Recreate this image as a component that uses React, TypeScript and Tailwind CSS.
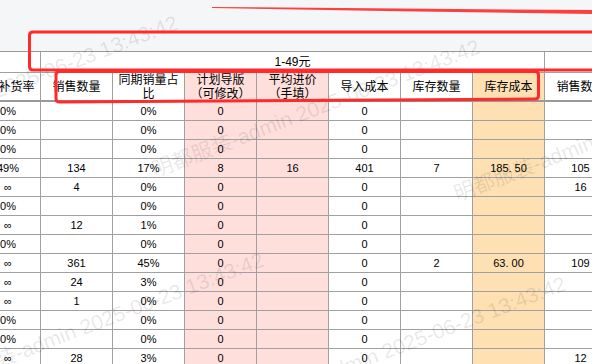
import React from "react";

const PINK = "bg-[#ffdfdc]";
const PEACH = "bg-[#fee0b3]";

const rows: string[][] = [
  ["0%", "", "0%", "0", "", "0", "", "", ""],
  ["0%", "", "0%", "0", "", "0", "", "", ""],
  ["0%", "", "0%", "0", "", "0", "", "", ""],
  ["49%", "134", "17%", "8", "16", "401", "7", "185.50", "105"],
  ["∞", "4", "0%", "0", "", "0", "", "", "16"],
  ["0%", "", "0%", "0", "", "0", "", "", ""],
  ["∞", "12", "1%", "0", "", "0", "", "", ""],
  ["0%", "", "0%", "0", "", "0", "", "", ""],
  ["∞", "361", "45%", "0", "", "0", "2", "63.00", "109"],
  ["∞", "24", "3%", "0", "", "0", "", "", ""],
  ["∞", "1", "0%", "0", "", "0", "", "", ""],
  ["0%", "", "0%", "0", "", "0", "", "", ""],
  ["0%", "", "0%", "0", "", "0", "", "", ""],
  ["∞", "28", "3%", "0", "", "0", "", "", "12"],
];

const bgFor = (i: number) => (i === 3 || i === 4 ? PINK : i === 7 ? PEACH : "bg-white");

function Value({ v }: { v: string }) {
  if (v.includes(".")) {
    const [a, b] = v.split(".");
    return (
      <span>
        {a}
        <span className="mr-[3px]">.</span>
        {b}
      </span>
    );
  }
  return <span>{v}</span>;
}

const headers: React.ReactNode[] = [
  "实际补货率",
  "销售数量",
  <>同期销量占<br />比</>,
  <>计划导版<br />（可修改）</>,
  <>平均进价<br />（手填）</>,
  "导入成本",
  "库存数量",
  "库存成本",
  "销售数量",
];

const cellBase = "border-r border-b border-[#a0a0a0] flex items-center justify-center text-center whitespace-nowrap overflow-hidden";

export default function App() {
  return (
    <div className="relative w-[592px] h-[364px] overflow-hidden bg-white font-['Liberation_Sans','Noto_Sans_CJK_SC',sans-serif] text-black">
      <div className="h-[51px] bg-[#f5f6f8]" />
      <div className="border-t border-[#999]">
        <div className="grid grid-cols-[repeat(9,72px)] w-[648px] ml-[-31px]">
          <div className={`${cellBase} h-[21px] bg-white`} />
          <div className={`${cellBase} col-span-7 h-[21px] bg-white text-[12px]`}>1-49元</div>
          <div className={`${cellBase} h-[21px] bg-white`} />

          {headers.map((h, i) => (
            <div
              key={i}
              className={`${cellBase} h-[29px] border-b-2 border-b-[#999] text-[12px] leading-[14px] ${bgFor(i)}`}
            >
              <span>{h}</span>
            </div>
          ))}

          {rows.map((r, ri) =>
            r.map((v, ci) => (
              <div
                key={`${ri}-${ci}`}
                className={`${cellBase} h-[19px] text-[11px] ${bgFor(ci)} ${ci === 0 ? "pl-[7px]" : ""}`}
              >
                <Value v={v} />
              </div>
            ))
          )}
        </div>
      </div>

      {/* watermark */}
      <div className="pointer-events-none absolute inset-0 overflow-hidden">
        <span className="absolute whitespace-nowrap text-[21px] leading-[28px] text-black/10 origin-left rotate-[-21deg] left-[-149px] top-[133px]">明都服装-admin 2025-06-23 13:43:42</span>
        <span className="absolute whitespace-nowrap text-[21px] leading-[28px] text-black/10 origin-left rotate-[-21deg] left-[153px] top-[157px]">明都服装-admin 2025-06-23 13:43:42</span>
        <span className="absolute whitespace-nowrap text-[21px] leading-[28px] text-black/10 origin-left rotate-[-21deg] left-[455px] top-[181px]">明都服装-admin 2025-06-23 13:43:42</span>
        <span className="absolute whitespace-nowrap text-[21px] leading-[28px] text-black/10 origin-left rotate-[-21deg] left-[-63px] top-[370px]">明都服装-admin 2025-06-23 13:43:42</span>
        <span className="absolute whitespace-nowrap text-[21px] leading-[28px] text-black/10 origin-left rotate-[-21deg] left-[239px] top-[394px]">明都服装-admin 2025-06-23 13:43:42</span>
      </div>

      {/* red annotations */}
      <svg className="pointer-events-none absolute inset-0" width="592" height="364" viewBox="0 0 592 364">
        <path d="M212 7 L400 8.6 L592 10 L592 14 L400 11.2 L212 8 Z" fill="#ff2a2a" opacity="0.9" />
        <path
          d="M592 32 L33 32 Q29.5 32 29.5 35.5 L29.5 66.5 Q29.5 70 33 70 L592 70"
          fill="none"
          stroke="#ff2a2a"
          strokeWidth="3"
          strokeLinejoin="round"
        />
        <path
          d="M59.5 71.5 L535 71.5 Q538.5 71.5 538.5 75 L538.5 95.5 Q538.5 99 535 99 L59.5 102 Q56 102 56 98.5 L56 75 Q56 71.5 59.5 71.5 Z"
          fill="none"
          stroke="#ff2a2a"
          strokeWidth="3"
          strokeLinejoin="round"
        />
      </svg>
    </div>
  );
}
